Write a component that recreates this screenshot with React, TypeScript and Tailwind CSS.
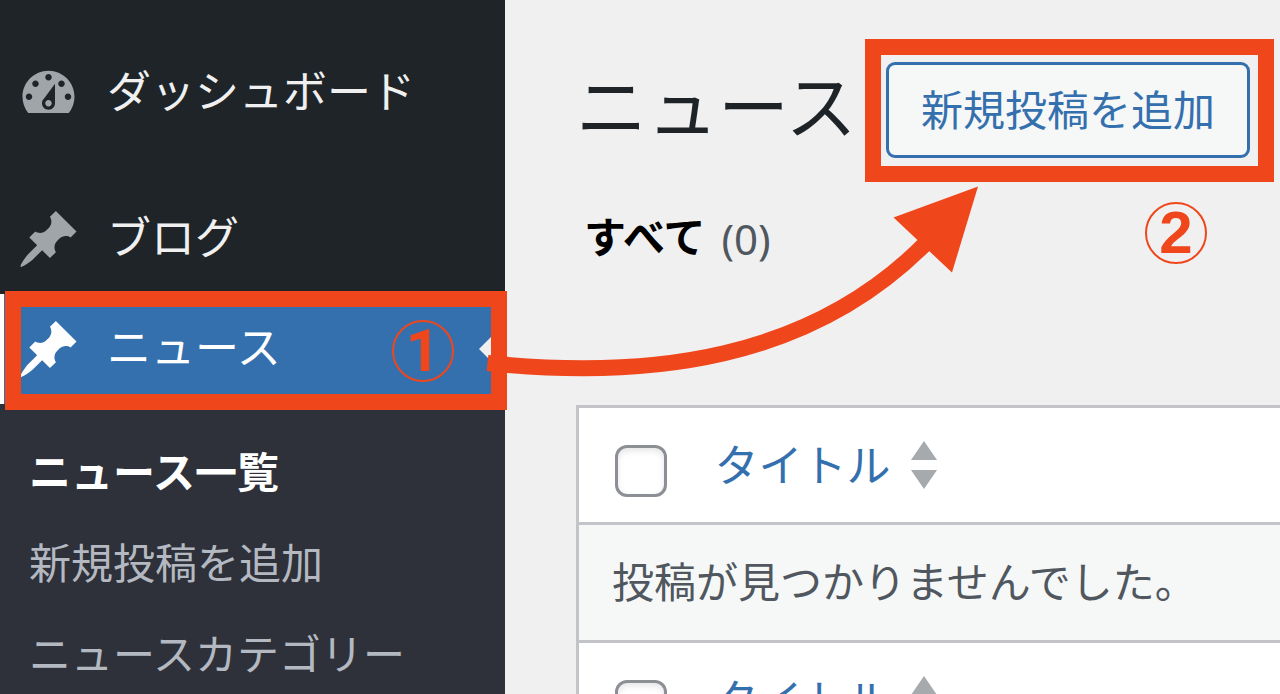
import type { ReactNode } from 'react'
import clsx from 'clsx'

function DashboardIcon() {
  return (
    <svg viewBox="0 0 20 20" fill="currentColor" className="size-[65px] shrink-0" aria-hidden="true">
      <path d="M3.76 16h12.48c1.1-1.37 1.76-3.11 1.76-5 0-4.42-3.58-8-8-8s-8 3.58-8 8c0 1.89.66 3.63 1.76 5zM10 4c.55 0 1 .45 1 1s-.45 1-1 1-1-.45-1-1 .45-1 1-1zM6 6c.55 0 1 .45 1 1s-.45 1-1 1-1-.45-1-1 .45-1 1-1zm8 0c.55 0 1 .45 1 1s-.45 1-1 1-1-.45-1-1 .45-1 1-1zm-5.37 5.55L12 7v6c0 1.1-.9 2-2 2s-2-.9-2-2c0-.57.24-1.08.63-1.45zM4 10c.55 0 1 .45 1 1s-.45 1-1 1-1-.45-1-1 .45-1 1-1zm12 0c.55 0 1 .45 1 1s-.45 1-1 1-1-.45-1-1 .45-1 1-1zm-5 3c0-.55-.45-1-1-1s-1 .45-1 1 .45 1 1 1 1-.45 1-1z" />
    </svg>
  )
}

function PinIcon() {
  return (
    <svg viewBox="0 0 20 20" fill="currentColor" className="size-[65px] shrink-0" aria-hidden="true">
      <path d="M10.44 3.02l1.82-1.82 6.36 6.35-1.83 1.82c-1.05-.68-2.48-.57-3.41.36l-.75.75c-.92.93-1.04 2.35-.35 3.41l-1.83 1.82-2.41-2.41-2.8 2.79c-.42.42-3.38 2.71-3.8 2.29s1.86-3.39 2.28-3.81l2.79-2.79L4.1 9.36l1.83-1.82c1.05.69 2.48.57 3.4-.36l.75-.75c.93-.92 1.05-2.35.36-3.41z" />
    </svg>
  )
}

function MenuLink({ icon, children }: { icon: ReactNode; children: ReactNode }) {
  return (
    <a href="#" className="flex h-[110px] items-center gap-[26px] pl-4 text-[#f0f0f1]">
      <span className="text-[#a0a5aa]">{icon}</span>
      <span className="pb-2 text-[44px] leading-none whitespace-nowrap">{children}</span>
    </a>
  )
}

function StepBadge({ n, className }: { n: number; className: string }) {
  return (
    <span
      className={clsx(
        'absolute flex size-[62px] items-center justify-center rounded-full border-2 border-[#f0461c] leading-none text-[#f0461c]',
        className,
      )}
    >
      {n}
    </span>
  )
}

function TitleHeading({ id }: { id: string }) {
  return (
    <tr className="h-[117px]">
      <td className="w-[137px] pt-3 pl-9 align-middle">
        <input
          id={id}
          type="checkbox"
          aria-label="すべて選択"
          className="block size-[52px] appearance-none rounded-xl border-3 border-[#8c8f94] bg-white shadow-[inset_0_3px_6px_rgba(0,0,0,0.1)]"
        />
      </td>
      <th className="text-left font-normal">
        <a href="#" className="flex h-12 items-center gap-5 text-[#3470ae]">
          <span className="pb-1 text-[44px] leading-none whitespace-nowrap">タイトル</span>
          <svg viewBox="0 0 26 48" className="h-12 w-[26px]" fill="#a7aaad" aria-hidden="true">
            <path d="M13 0 26 19H0zM0 29h26L13 48z" />
          </svg>
        </a>
      </th>
    </tr>
  )
}

export default function App() {
  return (
    <div className="relative flex h-screen overflow-hidden bg-[#f0f0f1] font-['Noto_Sans_CJK_JP',sans-serif]">
      <aside className="w-[505px] shrink-0 bg-[#1e2428] pt-[38px]">
        <nav>
          <MenuLink icon={<DashboardIcon />}>ダッシュボード</MenuLink>
          <div className="h-9" />
          <MenuLink icon={<PinIcon />}>ブログ</MenuLink>

          <div className="relative">
            <a
              href="#"
              className="flex h-[110px] items-center justify-between border-l-4 border-white bg-[#3470ae] pl-3 text-white"
            >
              <span className="flex items-center gap-[26px]">
                <PinIcon />
                <span className="pb-2 text-[44px] leading-none whitespace-nowrap">ニュース</span>
              </span>
              <svg viewBox="0 0 26 52" className="h-[52px] w-[26px]" fill="#f0f0f1" aria-hidden="true">
                <path d="M26 0v52L0 26z" />
              </svg>
            </a>
            <div className="pointer-events-none absolute -top-[3px] -right-0.5 -bottom-1.5 left-[5px] z-10 border-16 border-[#f0461c]" />
            <StepBadge n={1} className="top-[26px] right-[51px] font-['Roboto',sans-serif] text-[60px] font-bold" />
          </div>

          <ul className="bg-[#2e3139] pt-5 pb-6 text-[42px] leading-[91px] whitespace-nowrap text-[#b4b9c1]">
            <li>
              <a href="#" className="block pl-[29px] font-bold text-white">
                ニュース一覧
              </a>
            </li>
            <li>
              <a href="#" className="block pl-[29px]">
                新規投稿を追加
              </a>
            </li>
            <li>
              <a href="#" className="block pl-[29px]">
                ニュースカテゴリー
              </a>
            </li>
          </ul>
        </nav>
      </aside>

      <main className="min-w-0 flex-1 pt-[62px] pl-[71px]">
        <header className="flex items-center">
          <h1 className="w-[310px] pb-4 text-[71px] leading-[80px] font-normal whitespace-nowrap text-[#1d2327]">
            ニュース
          </h1>
          <div className="relative">
            <button
              type="button"
              className="block h-24 w-[364px] rounded-[9px] border-3 border-[#3470ae] bg-[#f6f7f7] pb-1 text-[42px] leading-none whitespace-nowrap text-[#3470ae]"
            >
              新規投稿を追加
            </button>
            <div className="pointer-events-none absolute -top-[23px] -right-6 -bottom-6 -left-[21px] border-16 border-[#f0461c]" />
            <StepBadge n={2} className="top-[140px] right-[43px] font-['Liberation_Sans',sans-serif] text-[60px] font-bold" />
          </div>
        </header>

        <p className="mt-11 flex items-center gap-4 pl-2 text-[42px] leading-[66px] whitespace-nowrap">
          <a href="#" className="pb-1 font-bold text-black">
            すべて
          </a>
          <span className="pt-1 font-['Noto_Sans',sans-serif] text-[#50575e]">(0)</span>
        </p>

        <table className="mt-[133px] w-full border-collapse border-3 border-r-0 border-[#c3c4c7] bg-white">
          <thead>
            <TitleHeading id="select-all-top" />
          </thead>
          <tbody>
            <tr className="h-[118px] border-y-3 border-[#c3c4c7] bg-[#f6f7f7]">
              <td colSpan={2} className="pb-1.5 pl-[33px] text-[42px] leading-none whitespace-nowrap text-[#50575e]">
                投稿が見つかりませんでした。
              </td>
            </tr>
          </tbody>
          <tfoot>
            <TitleHeading id="select-all-bottom" />
          </tfoot>
        </table>
      </main>

      {/* Arrow from the menu item to the add button */}
      <svg
        viewBox="0 0 1280 694"
        className="pointer-events-none absolute top-0 left-0 z-20 h-[694px] w-[1280px] max-w-none"
        aria-hidden="true"
      >
        <path d="M487.5 363C650 380 810 360 926 243" fill="none" stroke="#f0461c" strokeWidth="16" />
        <path d="M978 186.500 893.500 217.500 952 272.500z" fill="#f0461c" />
      </svg>
    </div>
  )
}
